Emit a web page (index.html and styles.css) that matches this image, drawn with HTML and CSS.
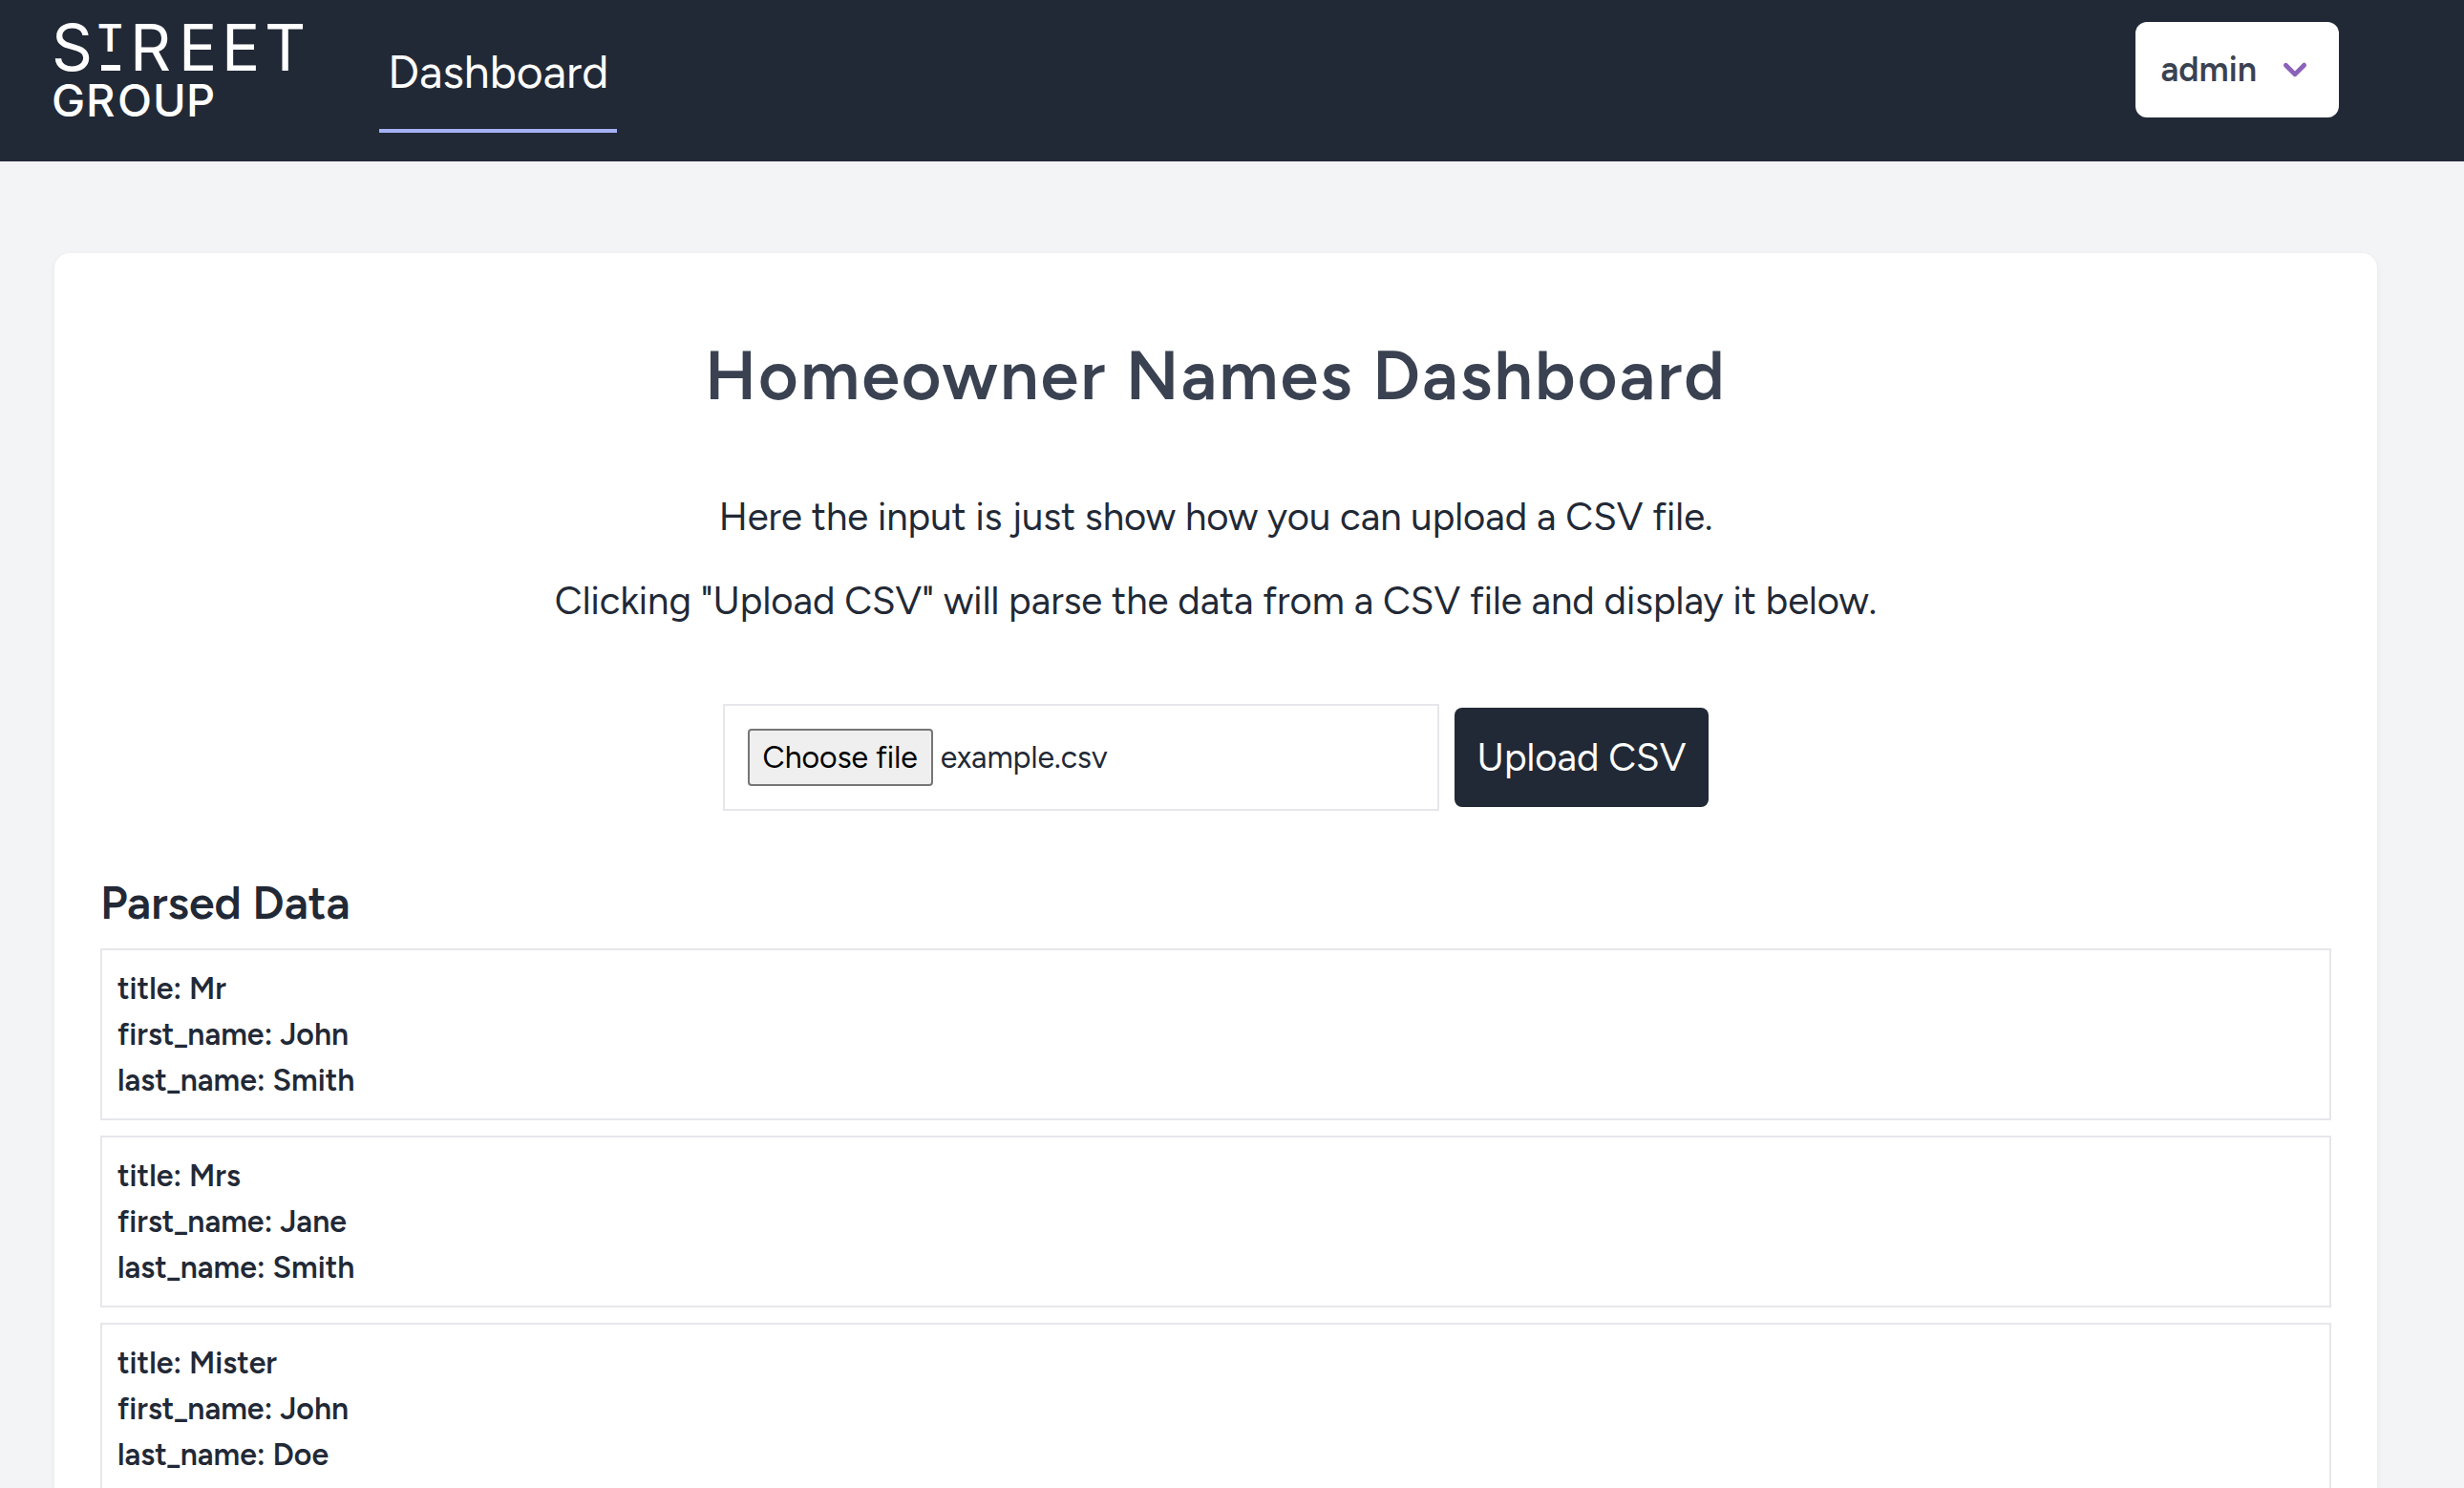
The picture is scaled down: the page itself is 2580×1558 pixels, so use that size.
FILE: index.html
```html
<!DOCTYPE html>
<html lang="en-GB">
<head>
  <meta charset="utf-8">
  <meta name="viewport" content="width=device-width, initial-scale=1">
  <title>Homeowner Names Dashboard</title>
  <link rel="stylesheet" href="styles.css">
</head>
<body>
  <header class="topbar">
    <a class="logo" href="#">
      <svg class="logo-mark" viewBox="0 0 262 100" role="img" aria-label="Street Group">
        <text class="logo-large" y="51" x="-3">S</text>
        <text class="logo-raised" x="45" y="31">T</text>
        <rect x="49" y="45" width="20" height="6"/>
        <text class="logo-large" y="51" x="79 130 175 220">REET</text>
        <text class="logo-small" y="99" x="-3 33 66 103 138">GROUP</text>
      </svg>
    </a>
    <nav class="nav">
      <a class="nav-link" href="#" aria-current="page">Dashboard</a>
    </nav>
    <button class="user-menu" type="button" aria-haspopup="menu">
      admin
      <svg class="chevron" viewBox="0 0 20 20" aria-hidden="true">
        <path fill-rule="evenodd" d="M5.293 7.293a1 1 0 011.414 0L10 10.586l3.293-3.293a1 1 0 111.414 1.414l-4 4a1 1 0 01-1.414 0l-4-4a1 1 0 010-1.414z" clip-rule="evenodd"/>
      </svg>
    </button>
  </header>

  <main class="card">
    <h1 class="title">Homeowner Names Dashboard</h1>
    <div class="intro">
      <p>Here the input is just show how you can upload a CSV file.</p>
      <p>Clicking "Upload CSV" will parse the data from a CSV file and display it below.</p>
    </div>

    <form class="upload">
      <label class="file-field">
        <input class="file-input" type="file" accept=".csv">
        <span class="file-button">Choose file</span>
        <span class="file-name">example.csv</span>
      </label>
      <button class="submit" type="button">Upload CSV</button>
    </form>

    <h2 class="subtitle">Parsed Data</h2>
    <ul class="records">
      <li class="record">
        <p>title: Mr</p>
        <p>first_name: John</p>
        <p>last_name: Smith</p>
      </li>
      <li class="record">
        <p>title: Mrs</p>
        <p>first_name: Jane</p>
        <p>last_name: Smith</p>
      </li>
      <li class="record">
        <p>title: Mister</p>
        <p>first_name: John</p>
        <p>last_name: Doe</p>
      </li>
    </ul>
  </main>
</body>
</html>
```
FILE: styles.css
```css
* {
  box-sizing: border-box;
  margin: 0;
  padding: 0;
}

html {
  height: 100%;
  overflow: hidden;
}

body {
  height: 100%;
  overflow: hidden;
  background: #f3f4f6;
  color: #222936;
  font-family: Figtree, Lato, sans-serif;
}

button {
  border: 0;
  font: inherit;
  cursor: pointer;
}

.topbar {
  display: flex;
  align-items: center;
  padding: 6px 131px 30px 57px;
  background: #222936;
}

.logo {
  display: flex;
  margin-right: 78px;
}

.logo-mark {
  width: 262px;
  height: 100px;
  overflow: visible;
  fill: #fff;
  font-family: Inter, sans-serif;
}

.logo-large {
  font-size: 67px;
}

.logo-raised {
  font-size: 40px;
  font-weight: 600;
}

.logo-small {
  font-size: 47px;
  font-weight: 500;
}

.nav {
  display: flex;
}

.nav-link {
  padding: 39px 9px 30px;
  border-bottom: 4px solid #a5b2f6;
  color: #fff;
  font-size: 48px;
  line-height: 60px;
  text-decoration: none;
}

.user-menu {
  display: flex;
  align-items: center;
  gap: 16px;
  height: 100px;
  margin-left: auto;
  padding: 0 22px 0 26px;
  border-radius: 12px;
  background: #fff;
  color: #3a4252;
  font-size: 36px;
  font-weight: 600;
}

.chevron {
  width: 48px;
  height: 48px;
  fill: #8b62b9;
}

.card {
  margin: 96px 91px 0 57px;
  padding: 88px 48px 48px;
  border-radius: 16px;
  background: #fff;
  box-shadow: 0 2px 6px rgba(0, 0, 0, 0.06);
}

.title {
  color: #3a4252;
  font-size: 72px;
  font-weight: 600;
  letter-spacing: 2px;
  line-height: 80px;
  text-align: center;
}

.intro {
  display: grid;
  gap: 28px;
  margin: 78px 0;
  font-size: 40px;
  line-height: 60px;
  text-align: center;
}

.upload {
  display: flex;
  align-items: center;
  justify-content: center;
  gap: 16px;
}

.file-field {
  position: relative;
  display: flex;
  align-items: center;
  gap: 8px;
  width: 750px;
  height: 112px;
  padding: 0 24px;
  border: 2px solid #e6e7eb;
  font-size: 32px;
}

.file-input {
  position: absolute;
  inset: 0;
  width: 100%;
  opacity: 0;
  cursor: pointer;
}

.file-button {
  padding: 8px 14px;
  border: 2px solid #767676;
  border-radius: 4px;
  background: #efefef;
  color: #000;
  line-height: 40px;
}

.submit {
  height: 104px;
  padding: 0 24px;
  border-radius: 8px;
  background: #222936;
  color: #fff;
  font-size: 40px;
}

.subtitle {
  margin: 68px 0 20px;
  font-size: 48px;
  font-weight: 600;
  line-height: 56px;
}

.records {
  display: grid;
  gap: 16px;
  list-style: none;
}

.record {
  padding: 16px;
  border: 2px solid #e6e7eb;
  font-size: 32px;
  font-weight: 600;
  line-height: 48px;
}
```
